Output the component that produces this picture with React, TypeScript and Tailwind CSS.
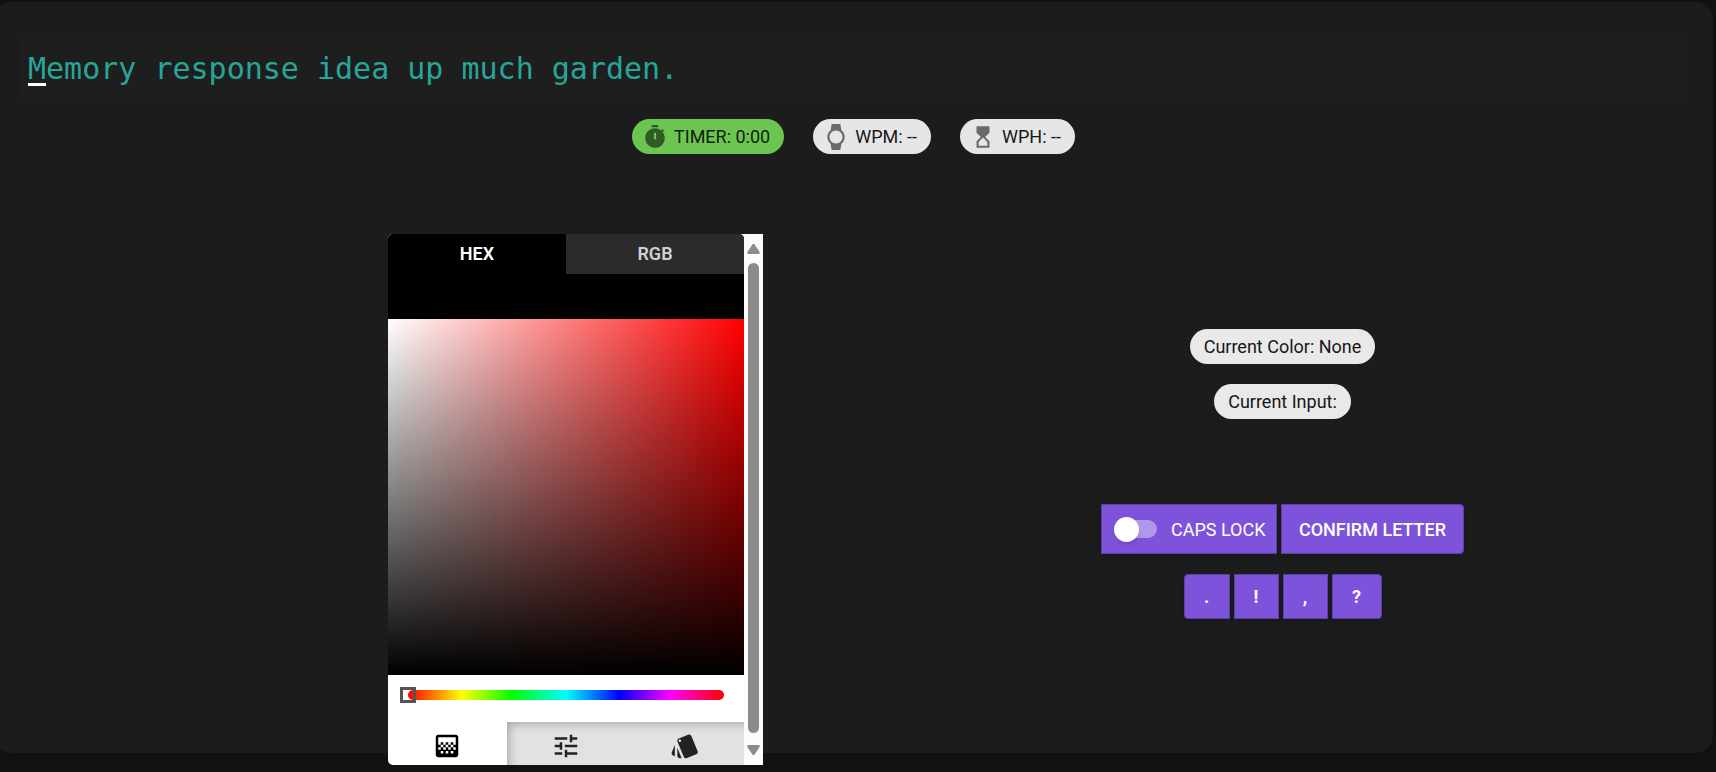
import { useState } from "react";
import type { ReactNode } from "react";
import { MdGradient, MdHourglassTop, MdStyle, MdTune } from "react-icons/md";

const TARGET = "Memory response idea up much garden.";

function TimerIcon() {
  return (
    <svg viewBox="0 0 24 24" className="size-[26px] fill-current" aria-hidden="true">
      <path d="M9 1h6v2H9zM19.03 7.39l1.42-1.42c-.43-.51-.9-.99-1.41-1.41l-1.42 1.42A8.962 8.962 0 0 0 12 4c-4.97 0-9 4.03-9 9s4.02 9 9 9a8.994 8.994 0 0 0 7.03-14.61zM13 14h-2V8h2v6z" />
    </svg>
  );
}

function WatchIcon() {
  return (
    <svg viewBox="0 0 24 24" className="size-[26px] fill-current" aria-hidden="true">
      <path d="M20 12c0-2.54-1.19-4.81-3.04-6.27L16 0H8l-.95 5.73C5.19 7.19 4 9.45 4 12s1.19 4.81 3.05 6.27L8 24h8l.96-5.73A7.976 7.976 0 0 0 20 12zM6 12c0-3.31 2.69-6 6-6s6 2.69 6 6-2.69 6-6 6-6-2.69-6-6z" />
    </svg>
  );
}

function StatChip({ icon, children, active = false }: { icon: ReactNode; children: ReactNode; active?: boolean }) {
  return (
    <div
      className={
        active
          ? "flex h-[35px] items-center rounded-full bg-[#6cc551] pr-3.5 pl-2.5 text-[#12200e]"
          : "flex h-[35px] items-center rounded-full bg-[#e6e6e6] pr-3.5 pl-2.5 text-[#171717]"
      }
    >
      <span className={active ? "mr-1.5 text-[#2f5a24]" : "mr-1.5 text-[#6a6a6a]"}>{icon}</span>
      <span className="text-[18px] leading-6">{children}</span>
    </div>
  );
}

function InfoChip({ children }: { children: ReactNode }) {
  return (
    <div className="flex h-[35px] items-center rounded-full bg-[#e9e9e9] px-3.5 text-[18px] leading-6 text-[#171717]">
      {children}
    </div>
  );
}

function Scrollbar() {
  return (
    <div className="flex w-[19px] flex-col items-center bg-[#fcfcfc] py-[9px] text-[#8b8b8b]" aria-hidden="true">
      <svg viewBox="0 0 13 11" className="h-[11px] w-[13px] fill-current">
        <path d="M5.4 1.6Q6.5 0 7.6 1.6L12.6 9Q13.2 11 11.5 11H1.5Q-.2 11 .4 9Z" />
      </svg>
      <div className="mt-[9px] mb-3 w-[11px] grow rounded-full bg-[#8b8b8b]" />
      <svg viewBox="0 0 13 11" className="h-[11px] w-[13px] fill-current">
        <path d="M5.4 9.4Q6.5 11 7.6 9.4L12.6 2Q13.2 0 11.5 0H1.5Q-.2 0 .4 2Z" />
      </svg>
    </div>
  );
}

function ColorPicker() {
  return (
    <section className="flex w-[375px] shrink-0 rounded-l-[5px] bg-white" aria-label="Color picker">
      <div className="flex min-w-0 grow flex-col overflow-hidden rounded-l-[5px]">
        <div className="overflow-hidden rounded-t-[5px] bg-black pb-[45px] text-[18px] leading-10">
          <div className="grid grid-cols-2">
            <button type="button" className="h-10 bg-black font-semibold text-white">HEX</button>
            <button type="button" className="h-10 bg-[#2b2b2b] font-semibold text-[#d0d0d0]">RGB</button>
          </div>
        </div>
        <div className="aspect-square w-full bg-[linear-gradient(to_top,#000,transparent),linear-gradient(to_right,#fff,#f00)]" />
        <div className="h-[47px] px-5 pt-[15px]">
          <div className="flex h-2.5 items-center rounded-full bg-[linear-gradient(to_right,#f00,#ff0_17%,#0f0_33%,#0ff_50%,#00f_67%,#f0f_83%,#f00)]">
            <input
              type="range"
              min={0}
              max={360}
              defaultValue={0}
              aria-label="Hue"
              className="-mx-2 block h-4 w-[calc(100%+16px)] shrink-0 cursor-pointer appearance-none bg-transparent [&::-webkit-slider-thumb]:size-4 [&::-webkit-slider-thumb]:appearance-none [&::-webkit-slider-thumb]:border-[3px] [&::-webkit-slider-thumb]:border-[#555]"
            />
          </div>
        </div>
        <div className="grid h-[43px] grid-cols-3 text-[30px] text-[#222]">
          <button type="button" aria-label="Palette" className="flex items-center justify-center pt-1 text-black">
            <MdGradient />
          </button>
          <div className="col-span-2 grid grid-cols-2 bg-[#e2e2e2] shadow-[inset_10px_10px_12px_-10px_rgba(0,0,0,0.35)]">
            <button type="button" aria-label="Adjust" className="flex items-center justify-center pt-1">
              <MdTune />
            </button>
            <button type="button" aria-label="Swatches" className="flex items-center justify-center pt-1">
              <MdStyle />
            </button>
          </div>
        </div>
      </div>
      <Scrollbar />
    </section>
  );
}

function InputControls() {
  const [caps, setCaps] = useState(false);
  return (
    <section className="flex w-[363px] shrink-0 flex-col items-center pt-[95px]" aria-label="Input">
      <div className="flex flex-col items-center gap-5">
        <InfoChip>Current Color: None</InfoChip>
        <InfoChip>Current Input:</InfoChip>
      </div>
      <div className="mt-[85px] flex w-full gap-1 text-[18px] text-white">
        <label className="flex h-[50px] w-[176px] cursor-pointer items-center border border-[#5d3fa5] bg-[#7e53dc] pl-3 shadow-md">
          <input type="checkbox" checked={caps} onChange={(e) => setCaps(e.target.checked)} className="peer sr-only" />
          <span className="flex h-[18px] w-[43px] items-center rounded-full bg-linear-to-r from-transparent from-20% to-[#b197ea] to-20% peer-checked:justify-end">
            <span className="size-[25px] shrink-0 rounded-full bg-white shadow-md" />
          </span>
          <span className="ml-3.5">CAPS LOCK</span>
        </label>
        <button type="button" className="h-[50px] grow rounded-r-[4px] border border-[#5d3fa5] bg-[#7e53dc] font-medium shadow-md">
          CONFIRM LETTER
        </button>
      </div>
      <div className="mt-5 flex gap-1 text-[18px] font-bold text-white">
        {[".", "!", ",", "?"].map((mark) => (
          <button
            key={mark}
            type="button"
            className="h-[45px] w-[45px] border border-[#5d3fa5] bg-[#7e53dc] shadow-md first:w-[46px] first:rounded-l-[4px] last:w-[50px] last:rounded-r-[4px]"
          >
            {mark}
          </button>
        ))}
      </div>
    </section>
  );
}

export default function App() {
  return (
    <div className="min-h-screen overflow-hidden bg-[#111] pt-0.5 font-['Roboto',sans-serif]">
      <main className="-ml-1.5 mr-[3px] flow-root rounded-[18px] bg-[#1c1c1c] px-[26px] pt-[31px]">
        <div className="rounded-[4px] bg-[#1e1e1e] px-2 pt-[17px] pb-[14px]">
          <p className="font-['DejaVu_Sans_Mono',monospace] text-[30px] leading-[38px] text-[#26a69a]">
            <span className="relative">
              {TARGET[0]}
              <span className="absolute bottom-0 left-0 h-[3px] w-full bg-white" />
            </span>
            {TARGET.slice(1)}
          </p>
        </div>
        <div className="mt-[17px] flex justify-center gap-[29px]">
          <StatChip active icon={<TimerIcon />}>TIMER: 0:00</StatChip>
          <StatChip icon={<WatchIcon />}>WPM: --</StatChip>
          <StatChip icon={<MdHourglassTop className="size-[26px]" />}>WPH: --</StatChip>
        </div>
        <div className="-mb-3 mt-20 flex items-start justify-center gap-[338px] pl-[145px]">
          <ColorPicker />
          <InputControls />
        </div>
      </main>
    </div>
  );
}
